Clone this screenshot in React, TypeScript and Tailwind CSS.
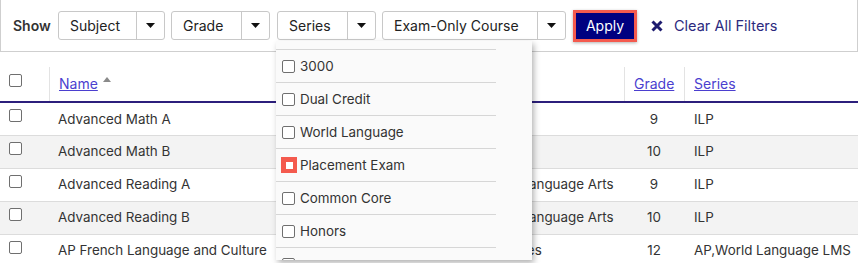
import React from "react";

const Caret = () => (
  <svg width="9" height="5" viewBox="0 0 9 5" className="block">
    <path d="M0 0 L9 0 L4.5 5 Z" fill="#111" />
  </svg>
);

const Split = ({ label, w }: { label: string; w: string }) => (
  <div className="flex h-[29px] rounded-[3px] border border-[#c8c8c8] bg-white">
    <div className={`${w} flex items-center pl-[11px] text-[14px] text-[#222]`}>{label}</div>
    <div className="flex w-[28px] items-center justify-center border-l border-[#c8c8c8]">
      <Caret />
    </div>
  </div>
);

const Box = () => (
  <div className="h-[13px] w-[13px] rounded-[2px] border border-[#6f6f6f] bg-white" />
);

type Row = { name: string; subject: string; grade: string; series: string };
const rows: Row[] = [
  { name: "Advanced Math A", subject: "Math", grade: "9", series: "ILP" },
  { name: "Advanced Math B", subject: "Math", grade: "10", series: "ILP" },
  { name: "Advanced Reading A", subject: "English Language Arts", grade: "9", series: "ILP" },
  { name: "Advanced Reading B", subject: "English Language Arts", grade: "10", series: "ILP" },
  { name: "AP French Language and Culture", subject: "Languages", grade: "12", series: "AP,World Language LMS" },
];

const items = ["", "3000", "Dual Credit", "World Language", "Placement Exam", "Common Core", "Honors", ""];

export default function App() {
  return (
    <div className="relative h-[263px] w-[858px] overflow-hidden bg-white font-['Inter',sans-serif] text-[#333]">
      {/* filter bar */}
      <div className="flex h-[52px] items-center border-x border-b border-[#cfcfcf] pl-[12px]">
        <span className="w-[45px] text-[14px] font-semibold text-[#333]">Show</span>
        <Split label="Subject" w="w-[77px]" />
        <div className="w-[6px]" />
        <Split label="Grade" w="w-[69px]" />
        <div className="w-[7px]" />
        <Split label="Series" w="w-[69px]" />
        <div className="w-[6px]" />
        <Split label="Exam-Only Course" w="w-[154px]" />
        <div className="w-[7px]" />
        <button className="flex h-[32px] w-[64px] items-center justify-center border-[3px] border-[#f45a4e] bg-[#000080] text-[14px] text-white shadow-[0_1px_3px_rgba(0,0,0,0.3)]">
          Apply
        </button>
        <div className="ml-[14px] flex items-center text-[14.5px] text-[#2b2a7e]">
          <svg width="12" height="12" viewBox="0 0 12 12" className="mr-[11px]">
            <path d="M1.5 1.5 L10.5 10.5 M10.5 1.5 L1.5 10.5" stroke="#1d1b6f" strokeWidth="3" strokeLinecap="butt" />
          </svg>
          Clear All Filters
        </div>
      </div>

      {/* table */}
      <table className="w-[858px] table-fixed border-collapse text-[13.4px] text-[#333]">
        <colgroup>
          <col className="w-[49px]" />
          <col className="w-[413px]" />
          <col className="w-[162px]" />
          <col className="w-[60px]" />
          <col className="w-[174px]" />
        </colgroup>
        <thead>
          <tr className="h-[50px] border-b-2 border-[#2c1f7c]">
            <th className="p-0 align-bottom">
              <div className="flex h-[34px] items-start pl-[9px] pt-[7px]">
                <Box />
              </div>
            </th>
            <th className="p-0 text-left align-bottom font-normal">
              <div className="flex h-[34px] items-center border-l border-[#e3e3e3] pb-[2px] pl-[9px]">
                <span className="text-[14px] text-[#4b3fcf] underline">Name</span>
                <svg width="8" height="5" viewBox="0 0 8 5" className="ml-[5px] mb-[8px]">
                  <path d="M0 5 L8 5 L4 0 Z" fill="#8a8a8a" />
                </svg>
              </div>
            </th>
            <th className="p-0 text-left align-bottom font-normal">
              <div className="flex h-[34px] items-center border-l border-[#e3e3e3] pl-[9px]" />
            </th>
            <th className="p-0 text-left align-bottom font-normal">
              <div className="flex h-[34px] items-center border-l border-[#e3e3e3] pb-[2px] pl-[9px]">
                <span className="text-[14px] text-[#4b3fcf] underline">Grade</span>
              </div>
            </th>
            <th className="p-0 text-left align-bottom font-normal">
              <div className="flex h-[34px] items-center border-l border-[#e3e3e3] pb-[2px] pl-[9px]">
                <span className="text-[14px] text-[#4b3fcf] underline">Series</span>
              </div>
            </th>
          </tr>
        </thead>
        <tbody>
          {rows.map((r, i) => (
            <tr key={i} className={`h-[33px] border-b border-[#dcdcdc] ${i % 2 === 1 ? "bg-[#f3f3f3]" : "bg-white"}`}>
              <td className="p-0 align-top">
                <div className="pl-[9px] pt-[6px]">
                  <Box />
                </div>
              </td>
              <td className="p-0 pl-[9px] whitespace-nowrap">{r.name}</td>
              <td className="p-0 pl-[10px] whitespace-nowrap">{r.subject}</td>
              <td className="p-0 text-center">{r.grade}</td>
              <td className="p-0 pl-[10px] whitespace-nowrap">{r.series}</td>
            </tr>
          ))}
        </tbody>
      </table>

      {/* dropdown */}
      <div className="absolute left-[276px] top-[41px] h-[219px] w-[256px] overflow-hidden bg-[#fafafa] shadow-[2px_3px_6px_rgba(0,0,0,0.3)]">
        <div className="mt-[-24px] w-[220px]">
          {items.map((it, idx) => (
            <div key={idx} className="flex h-[33px] items-center border-b border-[#d6d6d6] pl-[6px] text-[13.4px] text-[#333]">
              {it === "Placement Exam" ? (
                <div className="ml-[-1px] mr-[3px] flex h-[16px] w-[16px] items-center justify-center bg-[#f45a4e]">
                  <div className="h-[7px] w-[7px] bg-white" />
                </div>
              ) : (
                <div className="mr-[5px]">
                  <Box />
                </div>
              )}
              {it}
            </div>
          ))}
        </div>
      </div>
    </div>
  );
}
